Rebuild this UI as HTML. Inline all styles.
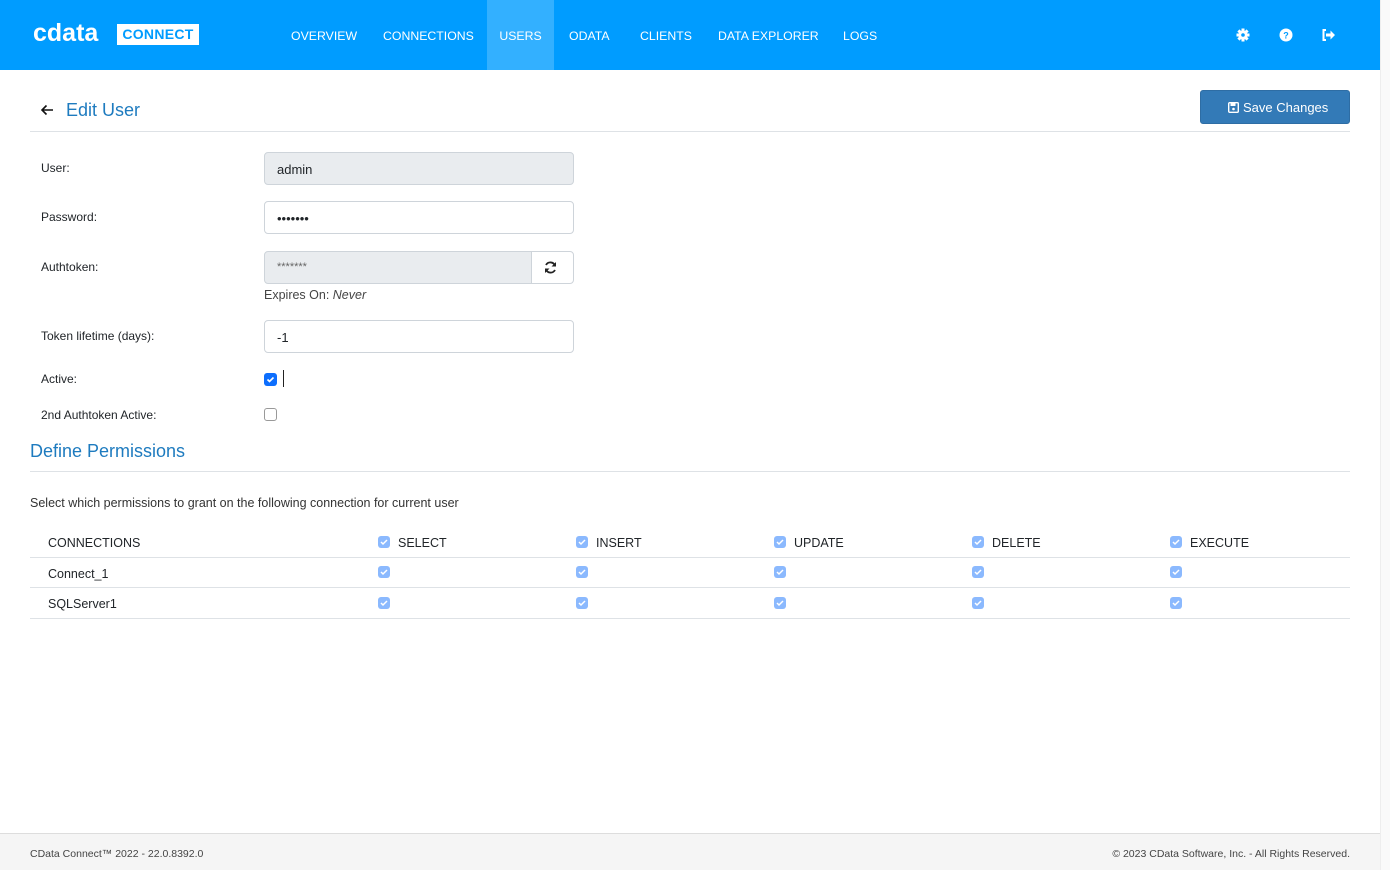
<!DOCTYPE html>
<html><head><meta charset="utf-8"><style>
*{box-sizing:border-box;margin:0;padding:0}
body{width:1390px;height:870px;position:relative;background:#fff;font-family:"Liberation Sans",sans-serif;color:#212529;overflow:hidden;font-size:13px}
.hdr{position:absolute;left:0;top:0;width:1380px;height:70px;background:#009cff}
.logo{position:absolute;left:33px;top:21px;color:#fff;font-size:25px;font-weight:bold;letter-spacing:0px;line-height:24px}
.conn{position:absolute;left:117px;top:24px;width:82px;height:21px;background:#fff;color:#009cff;font-weight:bold;font-size:14px;text-align:center;line-height:21px;letter-spacing:.3px}
.nav a{position:absolute;top:1px;height:70px;line-height:70px;color:#fff;font-size:12.3px;text-decoration:none}
.abs{position:absolute}
.lbl{position:absolute;left:41px;font-size:12px;color:#212529}
.inp{position:absolute;left:264px;width:310px;height:33px;border:1px solid #ced4da;border-radius:4px;padding-left:12px;line-height:33px;font-size:13px}
.cb{position:absolute;width:12px;height:12px;border-radius:3px;background:#8bb9fe}
.cb svg{position:absolute;left:2px;top:2px}
.th{position:absolute;top:536px;font-size:12.5px;color:#212529}
.hr{position:absolute;left:30px;width:1320px;height:1px;background:#dee2e6}
</style></head><body>
<div class="hdr">
<div class="logo">cdata</div>
<div class="conn">CONNECT</div>
<div class="nav">
<a style="left:291px">OVERVIEW</a>
<a style="left:383px">CONNECTIONS</a>
<a style="left:487px;width:67px;background:#33b0ff;text-align:center;top:0;line-height:72px">USERS</a>
<a style="left:569px">ODATA</a>
<a style="left:640px">CLIENTS</a>
<a style="left:718px">DATA EXPLORER</a>
<a style="left:843px">LOGS</a>
</div>
<svg class="abs" style="left:1236px;top:28px" width="14" height="14" viewBox="0 0 14 14"><g stroke="#fff" stroke-width="3"><line x1="7" y1="0.5" x2="7" y2="13.5"/><line x1="0.5" y1="7" x2="13.5" y2="7"/><line x1="2.4" y1="2.4" x2="11.6" y2="11.6"/><line x1="11.6" y1="2.4" x2="2.4" y2="11.6"/></g><circle cx="7" cy="7" r="4.6" fill="#fff"/><circle cx="7" cy="7" r="1.8" fill="#009cff"/></svg>
<svg class="abs" style="left:1279px;top:28px" width="14" height="14" viewBox="0 0 14 14"><circle cx="7" cy="7" r="6.5" fill="#fff"/><text x="7" y="10.5" fill="#009cff" font-size="9" font-weight="bold" text-anchor="middle" font-family="Liberation Sans">?</text></svg>
<svg class="abs" style="left:1321px;top:28px" width="15" height="14" viewBox="0 0 15 14"><path d="M5 2H2.5v10H5" fill="none" stroke="#fff" stroke-width="2"/><path d="M5 5.5h4.5V2.5L14 7l-4.5 4.5V8.5H5z" fill="#fff"/></svg>
</div>
<div class="abs" style="left:1380px;top:0;width:10px;height:870px;background:#fafafa;border-left:1px solid #eee"></div>

<svg class="abs" style="left:40px;top:104px" width="14" height="12" viewBox="0 0 14 12"><path d="M13 6H2M6.5 1.5L2 6l4.5 4.5" fill="none" stroke="#111" stroke-width="1.6"/></svg>
<div class="abs" style="left:66px;top:100px;font-size:18px;color:#1e7bbf">Edit User</div>
<div class="abs" style="left:1200px;top:90px;width:150px;height:34px;background:#337ab7;border:1px solid #2e6da4;border-radius:3px;color:#fff;font-size:13px;line-height:34px;padding-left:42px">Save Changes</div>
<svg class="abs" style="left:1228px;top:102px" width="11" height="11" viewBox="0 0 11 11"><rect x="0.7" y="0.7" width="9.6" height="9.6" rx="1" fill="none" stroke="#fff" stroke-width="1.4"/><rect x="2.5" y="1" width="5" height="3" fill="#fff"/><circle cx="5.5" cy="7" r="1.3" fill="#fff"/></svg>
<div class="hr" style="top:131px"></div>

<div class="lbl" style="top:161px">User:</div>
<div class="inp" style="top:152px;background:#e9ecef">admin</div>
<div class="lbl" style="top:210px">Password:</div>
<div class="inp" style="top:201px;font-size:13px;letter-spacing:0px">•••••••</div>
<div class="lbl" style="top:260px">Authtoken:</div>
<div class="inp" style="top:251px;width:268px;background:#e9ecef;border-radius:4px 0 0 4px;font-size:11px;color:#666;line-height:30px">*******</div>
<div class="inp" style="top:251px;left:531px;width:43px;border-radius:0 4px 4px 0"></div>
<svg class="abs" style="left:544px;top:261px" width="13" height="13" viewBox="0 0 13 13"><path d="M11 4.5A5 5 0 0 0 2 4M2 8.5A5 5 0 0 0 11 9" fill="none" stroke="#222" stroke-width="1.8"/><path d="M12 1v4.5H7.5zM1 12V7.5h4.5z" fill="#222"/></svg>
<div class="abs" style="left:264px;top:288px;font-size:12.5px;color:#444">Expires On: <i>Never</i></div>
<div class="lbl" style="top:329px">Token lifetime (days):</div>
<div class="inp" style="top:320px">-1</div>
<div class="lbl" style="top:372px">Active:</div>
<div class="cb" style="left:264px;top:373px;width:13px;height:13px;background:#0d6efd"><svg width="9" height="9" viewBox="0 0 9 9"><path d="M1.5 4.5l2 2 4-4" fill="none" stroke="#fff" stroke-width="1.6"/></svg></div>
<div class="abs" style="left:283px;top:370px;width:1px;height:17px;background:#222"></div>
<div class="lbl" style="top:408px">2nd Authtoken Active:</div>
<div class="abs" style="left:264px;top:408px;width:13px;height:13px;border:1px solid #999;border-radius:3px"></div>

<div class="abs" style="left:30px;top:441px;font-size:18px;color:#1e7bbf">Define Permissions</div>
<div class="hr" style="top:471px"></div>
<div class="abs" style="left:30px;top:496px;font-size:12.5px;color:#333">Select which permissions to grant on the following connection for current user</div>

<div class="th" style="left:48px">CONNECTIONS</div>
<div class="th" style="left:398px">SELECT</div>
<div class="th" style="left:596px">INSERT</div>
<div class="th" style="left:794px">UPDATE</div>
<div class="th" style="left:992px">DELETE</div>
<div class="th" style="left:1190px">EXECUTE</div>
<div class="hr" style="top:557px"></div>
<div class="abs" style="left:48px;top:567px;font-size:12.5px">Connect_1</div>
<div class="hr" style="top:587px"></div>
<div class="abs" style="left:48px;top:597px;font-size:12.5px">SQLServer1</div>
<div class="hr" style="top:618px"></div>

<div id="cbs"></div>
<script>
var xs=[378,576,774,972,1170],ys=[536,566,597],h='';
xs.forEach(function(x){ys.forEach(function(y){h+='<div class="cb" style="left:'+x+'px;top:'+y+'px"><svg width="8" height="8" viewBox="0 0 8 8"><path d="M1 4l2 2 4-4" fill="none" stroke="#fff" stroke-width="1.5"/></svg></div>';});});
document.getElementById('cbs').innerHTML=h;
</script>

<div class="abs" style="left:0;top:833px;width:1380px;height:37px;background:#f5f5f5;border-top:1px solid #ddd"></div>
<div class="abs" style="left:30px;top:848px;font-size:10.5px;color:#444">CData Connect™ 2022 - 22.0.8392.0</div>
<div class="abs" style="right:40px;top:848px;font-size:10.5px;color:#444">© 2023 CData Software, Inc. - All Rights Reserved.</div>
</body></html>
